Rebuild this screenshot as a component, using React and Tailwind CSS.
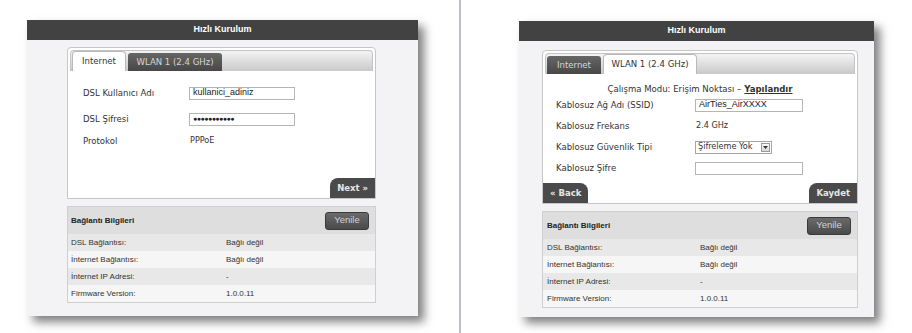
const vd = "font-['DejaVu_Sans_Condensed','DejaVu_Sans',sans-serif]";
const ar = "font-['Liberation_Sans',Arial,sans-serif]";

const infoRows = [
  ["DSL Bağlantısı:", "Bağlı değil"],
  ["İnternet Bağlantısı:", "Bağlı değil"],
  ["İnternet IP Adresi:", "-"],
  ["Firmware Version:", "1.0.0.11"],
];

const Header = () => (
  <div className={`flex h-[20px] items-center justify-center bg-[#424242] text-[9px] font-bold text-white ${ar}`}>
    Hızlı Kurulum
  </div>
);

const Tabs = ({ active }) => {
  const on = "h-[20px] rounded-t-[4px] border border-b-0 border-[#b9b9b9] bg-white text-[#333]";
  const off = "h-[18px] rounded-t-[3px] bg-gradient-to-b from-[#666] to-[#474747] text-[#d6d6d6]";
  return (
    <div className="mx-[2px] mt-[2px] flex h-[21px] items-end gap-[2px] rounded-t-[4px] border border-b-0 border-[#c4c4c4] bg-gradient-to-b from-[#f4f4f4] to-[#c9c9c9] pl-[1px]">
      <div className={`flex w-[54px] items-center justify-center text-[9.5px] ${vd} ${active === 0 ? on : off}`}>Internet</div>
      <div className={`flex w-[94px] items-center justify-center text-[9.5px] ${vd} ${active === 1 ? on : off}`}>WLAN 1 (2.4 GHz)</div>
    </div>
  );
};

const Btn = ({ children, side }) => (
  <div
    className={`flex h-[20px] items-center justify-center bg-[#4a4a4a] px-[7px] text-[8.5px] font-bold text-[#e6e6e6] font-['DejaVu_Sans',sans-serif] ${
      side === "right" ? "rounded-tl-[8px]" : "rounded-tr-[8px]"
    }`}
  >
    {children}
  </div>
);

const Info = ({ valueX, labelX }) => (
  <div className={`mt-[7px] border border-[#cfcfcf] ${ar} text-[8px] text-[#333]`}>
    <div className="flex h-[27px] items-center justify-between bg-[#dedede] pr-[6px]" style={{ paddingLeft: labelX }}>
      <span className="text-[8px] font-bold text-[#222]">Bağlantı Bilgileri</span>
      <div className="flex h-[18px] w-[44px] items-center justify-center rounded-[3px] border border-[#3a3a3a] bg-gradient-to-b from-[#6a6a6a] to-[#4a4a4a] text-[9.5px] text-[#d2d2d2]">
        Yenile
      </div>
    </div>
    {infoRows.map(([k, v], i) => (
      <div key={k} className={`flex h-[17px] items-center ${i % 2 === 0 ? "bg-[#e8e8e8]" : "bg-[#f6f6f6]"}`} style={{ paddingLeft: labelX }}>
        <span style={{ width: valueX - labelX }}>{k}</span>
        <span>{v}</span>
      </div>
    ))}
  </div>
);

const Input = ({ value, w, pw }) => (
  <div className={`flex h-[13px] items-center border border-[#b5b5b5] bg-white px-[3px] text-[9px] text-[#222] ${ar}`} style={{ width: w }}>
    {pw ? <span className="text-[7px] tracking-[-0.5px]">●●●●●●●●●●●</span> : value}
  </div>
);

const InternetPanel = () => (
  <div className="h-[296px] w-[391px] bg-[#f3f3f5] shadow-[6px_6px_9px_rgba(0,0,0,0.5)]">
    <Header />
    <div className="pl-[40px] pt-[7px]">
      <div className="flex h-[152px] w-[309px] flex-col rounded-t-[4px] border border-[#c6c6c6] bg-white">
        <Tabs active={0} />
        <div className={`flex-1 pl-[15px] text-[9.5px] text-[#333] ${vd}`}>
          <div className="mt-[14px] flex h-[16px] items-center">
            <span className="w-[106px]">DSL Kullanıcı Adı</span>
            <Input value="kullanici_adiniz" w={106} />
          </div>
          <div className="mt-[10px] flex h-[16px] items-center">
            <span className="w-[106px]">DSL Şifresi</span>
            <Input pw w={106} />
          </div>
          <div className="mt-[6px] flex h-[16px] items-center">
            <span className="w-[107px]">Protokol</span>
            <span className="text-[9px]">PPPoE</span>
          </div>
        </div>
        <div className="flex justify-end">
          <Btn side="right">Next »</Btn>
        </div>
      </div>
      <div className="w-[309px]">
        <Info labelX={3} valueX={158} />
      </div>
    </div>
  </div>
);

const WlanPanel = () => (
  <div className="h-[296px] w-[355px] bg-[#f3f3f5] shadow-[6px_6px_9px_rgba(0,0,0,0.5)]">
    <Header />
    <div className="pl-[23px] pt-[9px]">
      <div className="flex h-[154px] w-[316px] flex-col rounded-t-[4px] border border-[#c6c6c6] bg-white">
        <Tabs active={1} />
        <div className={`flex-1 pl-[13px] text-[9.5px] text-[#333] ${vd}`}>
          <div className="mt-[7px] flex h-[16px] items-center justify-center pr-[13px]">
            Çalışma Modu: Erişim Noktası – <span className="ml-[3px] font-bold underline">Yapılandır</span>
          </div>
          <div className="flex h-[16px] items-center">
            <span className="w-[139px]">Kablosuz Ağ Adı (SSID)</span>
            <Input value="AirTies_AirXXXX" w={108} />
          </div>
          <div className="mt-[5px] flex h-[16px] items-center">
            <span className="w-[140px]">Kablosuz Frekans</span>
            <span className="text-[9px]">2.4 GHz</span>
          </div>
          <div className="mt-[5px] flex h-[16px] items-center">
            <span className="w-[139px]">Kablosuz Güvenlik Tipi</span>
            <div className="flex h-[13px] w-[77px] items-center justify-between border border-[#a5a5a5] bg-white pl-[2px] pr-[1px] text-[9px]">
              <span>Şifreleme Yok</span>
              <span className="flex h-[9px] w-[9px] items-center justify-center border border-[#999] bg-gradient-to-b from-[#fafafa] to-[#d6d6d6]">
                <svg width="5" height="3" viewBox="0 0 5 3"><path d="M0 0h5L2.5 3z" fill="#333" /></svg>
              </span>
            </div>
          </div>
          <div className="mt-[5px] flex h-[16px] items-center">
            <span className="w-[139px]">Kablosuz Şifre</span>
            <Input value="" w={108} />
          </div>
        </div>
        <div className="flex justify-between">
          <Btn side="left">« Back</Btn>
          <Btn side="right">Kaydet</Btn>
        </div>
      </div>
      <div className="w-[316px]">
        <Info labelX={4} valueX={157} />
      </div>
    </div>
  </div>
);

export default function App() {
  return (
    <div className="flex h-[333px] w-[912px] bg-white">
      <div className="w-[459px] pl-[27px] pt-[20px]">
        <InternetPanel />
      </div>
      <div className="w-[2px] bg-[#bcbcc4]" />
      <div className="flex-1 pl-[58px] pt-[21px]">
        <WlanPanel />
      </div>
    </div>
  );
}
